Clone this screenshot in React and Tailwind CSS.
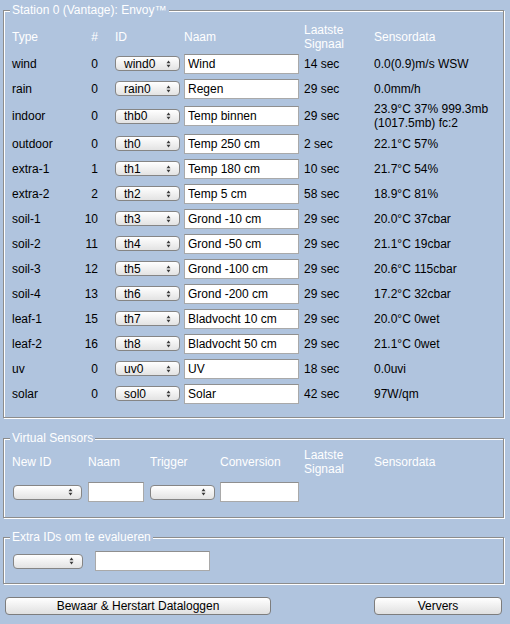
import React from "react";

const sensors = [
    { type: "wind", nr: "0", id: "wind0", naam: "Wind", last: "14 sec", data: "0.0(0.9)m/s WSW" },
    { type: "rain", nr: "0", id: "rain0", naam: "Regen", last: "29 sec", data: "0.0mm/h" },
    { type: "indoor", nr: "0", id: "thb0", naam: "Temp binnen", last: "29 sec", data: "23.9°C 37% 999.3mb (1017.5mb) fc:2", tall: true },
    { type: "outdoor", nr: "0", id: "th0", naam: "Temp 250 cm", last: "2 sec", data: "22.1°C 57%" },
    { type: "extra-1", nr: "1", id: "th1", naam: "Temp 180 cm", last: "10 sec", data: "21.7°C 54%" },
    { type: "extra-2", nr: "2", id: "th2", naam: "Temp 5 cm", last: "58 sec", data: "18.9°C 81%" },
    { type: "soil-1", nr: "10", id: "th3", naam: "Grond -10 cm", last: "29 sec", data: "20.0°C 37cbar" },
    { type: "soil-2", nr: "11", id: "th4", naam: "Grond -50 cm", last: "29 sec", data: "21.1°C 19cbar" },
    { type: "soil-3", nr: "12", id: "th5", naam: "Grond -100 cm", last: "29 sec", data: "20.6°C 115cbar" },
    { type: "soil-4", nr: "13", id: "th6", naam: "Grond -200 cm", last: "29 sec", data: "17.2°C 32cbar" },
    { type: "leaf-1", nr: "15", id: "th7", naam: "Bladvocht 10 cm", last: "29 sec", data: "20.0°C 0wet" },
    { type: "leaf-2", nr: "16", id: "th8", naam: "Bladvocht 50 cm", last: "29 sec", data: "21.1°C 0wet" },
    { type: "uv", nr: "0", id: "uv0", naam: "UV", last: "18 sec", data: "0.0uvi" },
    { type: "solar", nr: "0", id: "sol0", naam: "Solar", last: "42 sec", data: "97W/qm" },
];

// little up/down arrows of the mac style select
const Arrows = () => (
    <svg width="5" height="8" viewBox="0 0 5 8" className="shrink-0">
        <path d="M0.5 3.2 L2.5 0.6 L4.5 3.2 Z" fill="#3a3a3a" />
        <path d="M0.5 4.8 L2.5 7.4 L4.5 4.8 Z" fill="#3a3a3a" />
    </svg>
);

const Select = ({ value = "", width = "w-[65px]" }) => (
    <div className={`flex h-[15px] ${width} items-center justify-between rounded-[4px] border border-[#858585] bg-linear-to-b from-white to-[#e3e3e3] pl-[8px] pr-[8px] leading-none text-black`}>
        <span>{value}</span>
        <Arrows />
    </div>
);

const TextInput = ({ value = "", width = "w-[115px]" }) => (
    <input
        readOnly
        defaultValue={value}
        className={`h-[20px] ${width} border border-[#a9a9a9] border-t-[#8f8f8f] bg-white pl-[3px] text-black outline-none`}
    />
);

const Box = ({ legend, className, children }) => (
    <fieldset className={`ml-[3px] w-[501px] border border-[#8c8c8c] pl-[6px] pr-[6px] shadow-[1px_1px_0_#ffffff,inset_1px_1px_0_#ffffff] ${className}`}>
        <legend className="bg-[#b0c4de] px-[2px] leading-[14px] text-white">{legend}</legend>
        {children}
    </fieldset>
);

const App = () => {
    return (
        <div className="min-h-[624px] w-[510px] bg-[#b0c4de] pt-[3px] font-['Liberation_Sans',Arial,sans-serif] text-[12px] leading-[14px] text-black">
            {/* Station table */}
            <Box legend="Station 0 (Vantage): Envoy™" className="pt-[5px] pb-[11px]">
                <div className="grid grid-cols-[70px_16px_86px_120px_70px_1fr] pl-[2px]">
                    <div className="flex h-[29px] items-center text-white">Type</div>
                    <div className="flex h-[29px] items-center justify-end text-white">#</div>
                    <div className="flex h-[29px] items-center pl-[17px] text-white">ID</div>
                    <div className="flex h-[29px] items-center text-white">Naam</div>
                    <div className="flex h-[29px] items-center text-white">Laatste<br />Signaal</div>
                    <div className="flex h-[29px] items-center text-white">Sensordata</div>

                    {sensors.map(s => (
                        <React.Fragment key={s.type}>
                            <div className={`flex ${s.tall ? "h-[30px]" : "h-[25px]"} items-center`}>{s.type}</div>
                            <div className={`flex ${s.tall ? "h-[30px]" : "h-[25px]"} items-center justify-end`}>{s.nr}</div>
                            <div className={`flex ${s.tall ? "h-[30px]" : "h-[25px]"} items-center pl-[17px]`}>
                                <Select value={s.id} />
                            </div>
                            <div className={`flex ${s.tall ? "h-[30px]" : "h-[25px]"} items-center`}>
                                <TextInput value={s.naam} />
                            </div>
                            <div className={`flex ${s.tall ? "h-[30px]" : "h-[25px]"} items-center`}>{s.last}</div>
                            <div className={`flex ${s.tall ? "h-[30px]" : "h-[25px]"} w-[122px] items-center`}>{s.data}</div>
                        </React.Fragment>
                    ))}
                </div>
            </Box>

            {/* Virtual sensors */}
            <Box legend="Virtual Sensors" className="mt-[13px] pt-[3px] pb-[15px]">
                <div className="grid grid-cols-[76px_62px_70px_84px_70px_1fr] pl-[2px]">
                    <div className="flex h-[28px] items-center text-white">New ID</div>
                    <div className="flex h-[28px] items-center text-white">Naam</div>
                    <div className="flex h-[28px] items-center text-white">Trigger</div>
                    <div className="flex h-[28px] items-center text-white">Conversion</div>
                    <div className="flex h-[28px] items-center text-white">Laatste<br />Signaal</div>
                    <div className="flex h-[28px] items-center text-white">Sensordata</div>

                    <div className="mt-[6px] flex h-[20px] items-center pl-[1px]">
                        <Select width="w-[69px]" />
                    </div>
                    <div className="mt-[6px] flex h-[20px] items-center">
                        <TextInput width="w-[56px]" />
                    </div>
                    <div className="mt-[6px] flex h-[20px] items-center">
                        <Select width="w-[65px]" />
                    </div>
                    <div className="mt-[6px] flex h-[20px] items-center">
                        <TextInput width="w-[79px]" />
                    </div>
                    <div className="mt-[6px] h-[20px]"></div>
                    <div className="mt-[6px] h-[20px]"></div>
                </div>
            </Box>

            {/* Extra IDs */}
            <Box legend="Extra IDs om te evalueren" className="mt-[12px] pt-[7px] pb-[12px]">
                <div className="flex h-[20px] items-center gap-[12px] pl-[3px]">
                    <Select width="w-[70px]" />
                    <TextInput width="w-[115px]" />
                </div>
            </Box>

            {/* Buttons */}
            <div className="mt-[13px] flex items-center pl-[5px] pr-[8px]">
                <button className="h-[18px] w-[266px] rounded-[4px] border border-[#7d7d7d] bg-linear-to-b from-white to-[#e0e0e0] leading-none text-black">
                    Bewaar &amp; Herstart Dataloggen
                </button>
                <button className="ml-auto h-[18px] w-[128px] rounded-[4px] border border-[#7d7d7d] bg-linear-to-b from-white to-[#e0e0e0] leading-none text-black">
                    Ververs
                </button>
            </div>
        </div>
    );
};

export default App;
